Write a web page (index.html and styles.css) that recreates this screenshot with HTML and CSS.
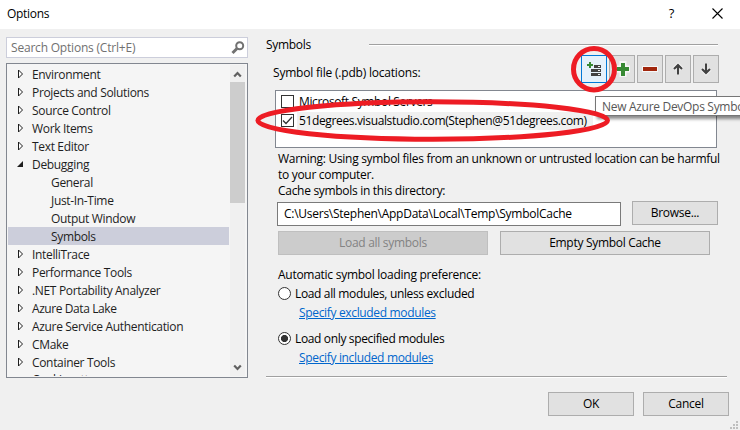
FILE: index.html
```html
<!DOCTYPE html>
<html lang="en">
<head>
<meta charset="utf-8">
<title>Options</title>
<link rel="stylesheet" href="styles.css">
</head>
<body>
<div class="dialog">
  <header class="titlebar">
    <span class="title">Options</span>
    <span class="help">?</span>
    <svg class="close" width="11" height="11" viewBox="0 0 11 11"><path d="M.5.5l10 10M10.5.5l-10 10"/></svg>
  </header>
  <div class="main">
    <aside class="side">
      <div class="search">
        <span>Search Options (Ctrl+E)</span>
        <svg width="14" height="14" viewBox="0 0 14 14"><circle cx="8.7" cy="4.8" r="3.5"/><path d="M6 7.5L1.5 12"/></svg>
      </div>
      <div class="tree">
        <ul class="items">
          <li><svg class="arrow" width="14" height="10" viewBox="0 0 14 10"><path d="M.5 1v8l4-4z"/></svg><span>Environment</span></li>
          <li><svg class="arrow" width="14" height="10" viewBox="0 0 14 10"><path d="M.5 1v8l4-4z"/></svg><span>Projects and Solutions</span></li>
          <li><svg class="arrow" width="14" height="10" viewBox="0 0 14 10"><path d="M.5 1v8l4-4z"/></svg><span>Source Control</span></li>
          <li><svg class="arrow" width="14" height="10" viewBox="0 0 14 10"><path d="M.5 1v8l4-4z"/></svg><span>Work Items</span></li>
          <li><svg class="arrow" width="14" height="10" viewBox="0 0 14 10"><path d="M.5 1v8l4-4z"/></svg><span>Text Editor</span></li>
          <li><svg class="arrow open" width="14" height="10" viewBox="0 0 14 10"><path d="M5 2v6h-6z"/></svg><span>Debugging</span></li>
          <li class="child"><span>General</span></li>
          <li class="child"><span>Just-In-Time</span></li>
          <li class="child"><span>Output Window</span></li>
          <li class="child selected"><span>Symbols</span></li>
          <li><svg class="arrow" width="14" height="10" viewBox="0 0 14 10"><path d="M.5 1v8l4-4z"/></svg><span>IntelliTrace</span></li>
          <li><svg class="arrow" width="14" height="10" viewBox="0 0 14 10"><path d="M.5 1v8l4-4z"/></svg><span>Performance Tools</span></li>
          <li><svg class="arrow" width="14" height="10" viewBox="0 0 14 10"><path d="M.5 1v8l4-4z"/></svg><span>.NET Portability Analyzer</span></li>
          <li><svg class="arrow" width="14" height="10" viewBox="0 0 14 10"><path d="M.5 1v8l4-4z"/></svg><span class="t-lake">Azure Data Lake</span></li>
          <li><svg class="arrow" width="14" height="10" viewBox="0 0 14 10"><path d="M.5 1v8l4-4z"/></svg><span>Azure Service Authentication</span></li>
          <li><svg class="arrow" width="14" height="10" viewBox="0 0 14 10"><path d="M.5 1v8l4-4z"/></svg><span>CMake</span></li>
          <li><svg class="arrow" width="14" height="10" viewBox="0 0 14 10"><path d="M.5 1v8l4-4z"/></svg><span>Container Tools</span></li>
          <li class="last"><span>Cookiecutter</span></li>
        </ul>
        <div class="scrollbar">
          <svg width="15" height="17" viewBox="0 0 15 17"><path d="M4.2 11.5L7.5 8l3.3 3.5"/></svg>
          <div class="thumb"></div>
          <svg width="15" height="17" viewBox="0 0 15 17"><path d="M4.2 6.5L7.5 10l3.3-3.5"/></svg>
        </div>
      </div>
    </aside>
    <section class="page">
      <div class="group"><span>Symbols</span><hr></div>
      <div class="bar">
        <span class="loc">Symbol file (.pdb) locations:</span>
        <div class="tools">
          <button class="tool hot"><svg width="24" height="26" viewBox="0 0 24 26"><path class="green" d="M5 9h6M8 6v6"/><path class="dark" d="M12 9h7v3h-7zM9 13h10v3H9zM9 17h10v3H9z"/><path class="dots" d="M16 10.500h2M16 14.500h2M16 18.500h2"/></svg></button>
          <button class="tool"><svg width="24" height="26" viewBox="0 0 24 26"><path class="halo" d="M5 13h15M13 5v16"/><path class="green thick" d="M7 13h12M13 7v13"/></svg></button>
          <button class="tool"><svg width="24" height="26" viewBox="0 0 24 26"><path class="halo small" d="M4 13h16"/><path class="red" d="M5 13h14"/></svg></button>
          <button class="tool"><svg width="24" height="26" viewBox="0 0 24 26"><path class="halo-line" d="M12 18.500V9M8 13l4-4 4 4"/><path class="arrow-line" d="M12 18.500V9M8 13l4-4 4 4"/></svg></button>
          <button class="tool"><svg width="24" height="26" viewBox="0 0 24 26"><path class="halo-line" d="M12 7.500V17M8 13l4 4 4-4"/><path class="arrow-line" d="M12 7.500V17M8 13l4 4 4-4"/></svg></button>
        </div>
      </div>
      <div class="list">
        <div class="row"><i class="check"></i><span>Microsoft Symbol Servers</span></div>
        <div class="row"><i class="check"><svg width="11" height="11" viewBox="0 0 11 11"><path d="M1 5.500l3 3L10 2"/></svg></i><span class="focus">51degrees.visualstudio.com(Stephen@51degrees.com)</span></div>
      </div>
      <p class="warning">Warning: Using symbol files from an unknown or untrusted location can be harmful<br>to your computer.</p>
      <p class="cache-label">Cache symbols in this directory:</p>
      <div class="cache">
        <div class="input"><span>C:\Users\Stephen\AppData\Local\Temp\SymbolCache</span></div>
        <button class="btn">Browse...</button>
      </div>
      <div class="actions">
        <button class="btn wide disabled">Load all symbols</button>
        <button class="btn wide">Empty Symbol Cache</button>
      </div>
      <p class="auto">Automatic symbol loading preference:</p>
      <div class="option"><i class="radio"></i><span>Load all modules, unless excluded</span></div>
      <a class="link">Specify excluded modules</a>
      <div class="option second"><i class="radio on"></i><span>Load only specified modules</span></div>
      <a class="link">Specify included modules</a>
      <hr class="divider">
      <footer class="footer">
        <button class="btn">OK</button>
        <button class="btn">Cancel</button>
      </footer>
    </section>
  </div>
  <div class="tooltip"><span>New Azure DevOps Symbol</span></div>
  <svg class="marks" width="740" height="430" viewBox="0 0 740 430"><ellipse cx="594" cy="69.200" rx="20.500" ry="20.700"/><ellipse cx="432.700" cy="120.500" rx="174.800" ry="18.700"/></svg>
  <svg class="grip" width="9" height="9" viewBox="0 0 9 9"><path d="M6 0h2v2H6zM3 3h2v2H3zM6 3h2v2H6zM0 6h2v2H0zM3 6h2v2H3zM6 6h2v2H6z"/></svg>
</div>
</body>
</html>
```
FILE: styles.css
```css
* { box-sizing: border-box; }
body { margin: 0; }
.dialog {
  position: relative; width: 740px; height: 430px; overflow: hidden;
  background: #f0f0f0; color: #000;
  font: 12px/16px "Open Sans", "Noto Sans", sans-serif; letter-spacing: -0.3px;
}
p, ul, hr { margin: 0; padding: 0; border: 0; }
p { white-space: nowrap; }
button { font: inherit; letter-spacing: inherit; color: inherit; padding: 0; border-radius: 0; }
span { white-space: nowrap; }
svg { display: block; flex: none; }
path, circle, ellipse { fill: none; stroke-width: 1; }

.titlebar { display: flex; align-items: center; height: 29px; padding: 0 17px 3px 7px; background: #fff; }
.title { flex: 1; padding-top: 2px; }
.help { margin-right: 38px; font-size: 13px; }
.close path { stroke: #000; stroke-width: 1.1; }

.main { display: flex; height: 401px; }
.side { width: 242px; margin: 8px 18px 0 6px; }
.search { display: flex; justify-content: space-between; align-items: center; height: 21px; padding: 0 2px 0 4px; border: 1px solid #cccedb; background: #fff; color: #717171; letter-spacing: -0.2px; }
.search span { padding-top: 1px; }
.search svg circle { stroke: #717171; stroke-width: 2; }
.search svg path { stroke: #717171; stroke-width: 3; }
.tree { display: flex; height: 315px; margin-top: 5px; padding: 1px 2px 1px 1px; border: 1px solid #828790; background: #f5f5f5; color: #1e1e1e; }
.items { flex: 1; list-style: none; height: 311px; overflow: hidden; margin-right: 1px; }
.items li { display: flex; align-items: center; height: 18px; padding: 0 0 0 10px; letter-spacing: -0.33px; }
.items li span { padding-top: 1px; }
.items .child { padding-left: 43px; }
.items .selected { background: #cccedb; }
.items .last { padding-left: 24px; }
.items .last span { padding-top: 0; }
.items .t-lake { letter-spacing: -0.42px; }
.arrow path { fill: #fff; stroke: #1e1e1e; }
.arrow.open path { fill: #1e1e1e; stroke: none; }
.arrow { overflow: visible; }
.scrollbar { display: flex; flex-direction: column; width: 15px; background: #f0f0f0; }
.scrollbar path { stroke: #606060; stroke-width: 2.2; }
.thumb { height: 121px; margin-bottom: auto; background: #cdcdcd; }

.page { width: 474px; padding-top: 8px; }
.group { display: flex; align-items: center; height: 16px; }
.group span { width: 103px; }
.group hr { width: 349px; height: 2px; background: linear-gradient(#a0a0a0 50%, #fff 50%); }
.bar { display: flex; justify-content: space-between; height: 30px; margin: 2px 21px 0 7px; }
.loc { margin-top: 10px; letter-spacing: -0.2px; }
.tools { display: flex; gap: 2px; }
.tool { width: 26px; height: 28px; border: 1px solid #adadad; background: #e1e1e1; }
.tool.hot { border-color: #0078d7; background: #e5f1fb; }
.halo { stroke: #f7f7f7; stroke-width: 7; }
.halo.small { stroke-width: 6; }
.green { stroke: #388a34; stroke-width: 2; }
.green.thick { stroke-width: 4; }
.dark { fill: #424242; }
.dots { stroke: #f0f0f0; }
.red { stroke: #a1260d; stroke-width: 4; }
.arrow-line { stroke: #424242; stroke-width: 2.2; }
.halo-line { stroke: #f7f7f7; stroke-width: 4; }
.list { width: 442px; height: 58px; margin: 5px 0 0 9px; padding: 1px 5px; border: 1px solid #828790; background: #fff; }
.row { display: flex; align-items: center; height: 19px; letter-spacing: -0.36px; }
.check { width: 13px; height: 13px; margin-right: 3px; border: 1px solid #333; background: #fff; }
.check path { stroke: #333; stroke-width: 1.3; }
.row span { padding: 1px 6px 1px 2px; }
.focus { background: #f0f0f0; }
.warning { margin: 3px 0 0 12px; line-height: 15.5px; }
.cache-label { margin: 1px 0 0 12px; }
.cache { display: flex; align-items: flex-start; gap: 11px; margin: 2px 0 0 11px; }
.input { width: 344px; height: 24px; margin-top: 1px; padding: 3px 6px; border: 1px solid #7a7a7a; background: #fff; letter-spacing: -0.26px; }
.btn { width: 86px; height: 24px; border: 1px solid #adadad; background: #e1e1e1; }
.wide { width: 210px; }
.disabled { border-color: #bfbfbf; background: #ccc; color: #838383; }
.actions { display: flex; gap: 12px; margin: 5px 0 0 12px; }
.auto { margin: 12px 0 0 12px; letter-spacing: -0.27px; }
.option { display: flex; align-items: center; height: 16px; margin: 2px 0 0 12px; letter-spacing: -0.35px; }
.option span { padding-top: 1px; }
.option.second { margin-top: 9px; }
.radio { width: 13px; height: 13px; margin-right: 4px; border: 1px solid #333; border-radius: 50%; background: #fff; }
.radio.on { background: radial-gradient(circle, #333 3.2px, #fff 3.9px); }
.link { display: block; height: 16px; margin: 4px 0 0 33px; color: #0066cc; text-decoration: underline; letter-spacing: -0.34px; }
.divider { width: 461px; height: 2px; margin-top: 10px; background: linear-gradient(#a0a0a0 50%, #fff 50%); }
.footer { display: flex; justify-content: flex-end; gap: 9px; margin: 14px 11px 0 0; }

.tooltip { position: absolute; left: 595px; top: 96px; width: 160px; height: 20px; padding: 2px 6px; border: 1px solid #767676; background: #fff; color: #575757; box-shadow: 2px 3px 3px rgba(0, 0, 0, .45); }
.marks { position: absolute; left: 0; top: 0; pointer-events: none; }
.marks ellipse { stroke: #ed1c24; stroke-width: 5; }
.grip { position: absolute; left: 730px; top: 421px; }
.grip path { fill: #bfbfbf; }
```
